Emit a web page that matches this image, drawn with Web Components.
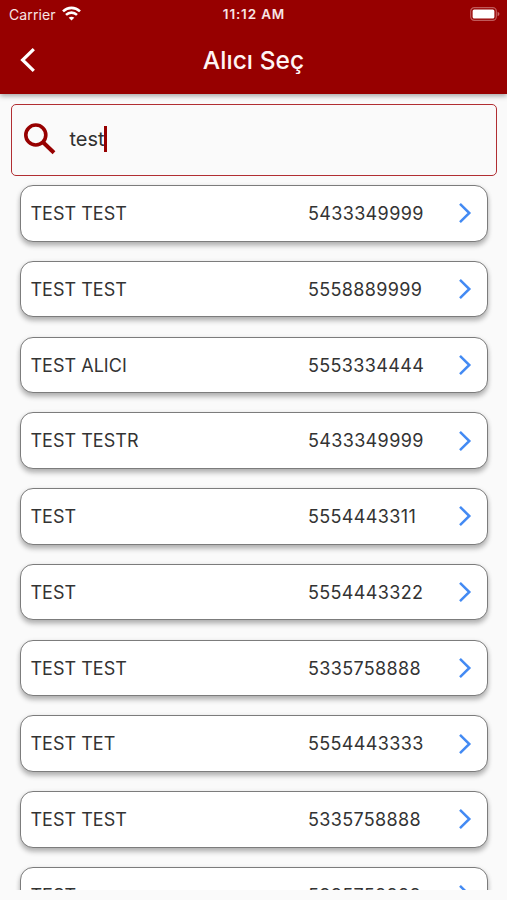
<!DOCTYPE html>
<html lang="tr">
<head>
<meta charset="utf-8">
<title>Alıcı Seç</title>
<style>
html, body { margin: 0; height: 100%; overflow: hidden; background: #fafafa; }
</style>
</head>
<body>
<recipient-screen></recipient-screen>
<script>
const mount = (el, html) => { el.attachShadow({ mode: 'open' }).innerHTML = html; };

customElements.define('status-bar', class extends HTMLElement {
  connectedCallback() {
    mount(this, `<style>
      :host { display: grid; grid-template-columns: 1fr auto 1fr; align-items: center; height: 27px; padding: 0 7px 0 9px; box-sizing: border-box; color: #f7e4e4; font-size: 14px; line-height: 27px; }
      .left { display: flex; align-items: center; gap: 6px; }
      .carrier { letter-spacing: .12px; }
      .time { font-weight: 600; font-size: 13.5px; letter-spacing: .85px; padding-top: 1px; margin-left: -1px; }
      .battery { justify-self: end; margin-top: -1px; }
      svg { display: block; }
      .wifi { margin-top: -1px; }
    </style>
    <div class="left"><span class="carrier">Carrier</span>
      <svg class="wifi" width="19" height="15" viewBox="0 0 19 15" fill="none" stroke="#fff" stroke-width="2.6">
        <path d="M1 5.4C5.9.7 13.1.7 18 5.4"/><path d="M4 8.9c3.2-3 7.8-3 11 0"/><path d="M9.5 14.6l-2.8-2.9c1.6-1.4 4-1.4 5.6 0z" fill="#fff" stroke="none"/>
      </svg></div>
    <span class="time">11:12 AM</span>
    <svg class="battery" width="30" height="14" viewBox="0 0 30 14">
      <rect x=".7" y=".7" width="25.6" height="12.6" rx="3.6" fill="none" stroke="#c05a5a" stroke-width="1.2"/>
      <rect x="2.6" y="2.4" width="21.8" height="9.2" rx="1.6" fill="#fff"/>
      <path d="M27.6 4.8c2.4.8 2.4 3.6 0 4.4z" fill="#c96a6a"/>
    </svg>`);
  }
});

customElements.define('app-bar', class extends HTMLElement {
  connectedCallback() {
    mount(this, `<style>
      :host { display: grid; grid-template-columns: 57px 1fr 57px; align-items: center; height: 66px; color: #fff; }
      h1 { margin: 0; text-align: center; font-size: 24.5px; font-weight: 500; line-height: 66px; color: #fff5f5; letter-spacing: .05px; }
      svg { display: block; margin: -1px 0 0 20px; }
    </style>
    <svg width="16" height="26" viewBox="0 0 16 26" fill="none" stroke="#fff" stroke-width="3.2"><path d="M13.8 2.2L2.6 13l11.2 10.8"/></svg>
    <h1><slot></slot></h1>`);
  }
});

customElements.define('search-field', class extends HTMLElement {
  connectedCallback() {
    mount(this, `<style>
      :host { display: flex; align-items: center; height: 72px; box-sizing: border-box; border: 1.3px solid #b12e32; border-radius: 5px; padding: 0 0 2px 12px; color: #303030; font-size: 20px; }
      svg { display: block; margin-right: 13.5px; }
      .text { line-height: 28px; }
      i { width: 2.5px; height: 26px; background: #970000; margin-left: -.5px; }
    </style>
    <svg width="32" height="32" viewBox="0 0 32 32" fill="none" stroke="#970000"><circle cx="11.8" cy="12" r="10" stroke-width="3.6"/><path d="M19.3 19.5l10.7 10.3" stroke-width="4"/></svg>
    <span class="text"><slot></slot></span><i></i>`);
  }
});

customElements.define('recipient-row', class extends HTMLElement {
  connectedCallback() {
    mount(this, `<style>
      :host { display: grid; grid-template-columns: 277.5px 1fr 14px; align-items: center; flex: none; height: 56.5px; box-sizing: border-box; padding: 0 15px 0 9px; background: #fff; border: 1.4px solid #7c7c7c; border-radius: 13px; box-shadow: 0 4px 5px rgba(0,0,0,.24), 0 1px 5px rgba(0,0,0,.1); color: #333; font-size: 18px; line-height: 24px; }
      .name, .phone { padding-top: 1.6px; }
      .name { letter-spacing: .03px; }
      .phone { letter-spacing: .36px; }
      svg { display: block; }
    </style>
    <span class="name"><slot name="name"></slot></span><span class="phone"><slot name="phone"></slot></span>
    <svg width="14" height="22" viewBox="0 0 14 22" fill="none" stroke="#438af3" stroke-width="2.5"><path d="M2 1.8L11.3 11 2 20.2"/></svg>`);
  }
});

customElements.define('recipient-screen', class extends HTMLElement {
  connectedCallback() {
    const rows = [['TEST TEST','5433349999'],['TEST TEST','5558889999'],['TEST ALICI','5553334444'],['TEST TESTR','5433349999'],['TEST','5554443311'],['TEST','5554443322'],['TEST TEST','5335758888'],['TEST TET','5554443333'],['TEST TEST','5335758888'],['TEST','5335758888']];
    mount(this, `<style>
      :host { display: flex; flex-direction: column; width: 507px; height: 890px; overflow: hidden; background: #fafafa; font-family: Inter, "Liberation Sans", sans-serif; }
      header { flex: none; height: 93.5px; background: #970000; box-shadow: 0 2px 5px rgba(0,0,0,.35); }
      search-field { flex: none; margin: 10.2px 10px 0 11px; }
      main { display: flex; flex-direction: column; gap: 19.25px; padding: 9.5px 19.4px 0 20.4px; }
    </style>
    <header><status-bar></status-bar><app-bar>Alıcı Seç</app-bar></header>
    <search-field>test</search-field>
    <main>${rows.map(([n, p]) => `<recipient-row><span slot="name">${n}</span><span slot="phone">${p}</span></recipient-row>`).join('')}</main>`);
  }
});
</script>
</body>
</html>
